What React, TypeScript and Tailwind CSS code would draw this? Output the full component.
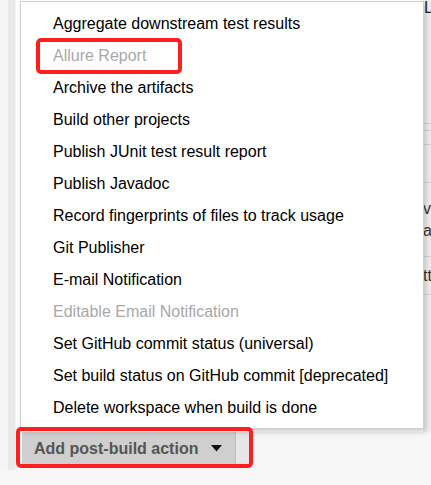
import React from "react";

const items: { label: string; disabled?: boolean }[] = [
  { label: "Aggregate downstream test results" },
  { label: "Allure Report", disabled: true },
  { label: "Archive the artifacts" },
  { label: "Build other projects" },
  { label: "Publish JUnit test result report" },
  { label: "Publish Javadoc" },
  { label: "Record fingerprints of files to track usage" },
  { label: "Git Publisher" },
  { label: "E-mail Notification" },
  { label: "Editable Email Notification", disabled: true },
  { label: "Set GitHub commit status (universal)" },
  { label: "Set build status on GitHub commit [deprecated]" },
  { label: "Delete workspace when build is done" },
];

export default function App() {
  return (
    <div
      className="relative w-[431px] h-[485px] overflow-hidden bg-[#f7f7f7] text-black"
      style={{ fontFamily: '"Liberation Sans", Arial, sans-serif' }}
    >
      {/* underlying page */}
      <div className="flex h-[470px]">
        <div className="w-[8px] bg-[#f5f5f5]" />
        <div className="w-[7px] bg-[#e9e9e9]" />
        <div className="w-[1px] bg-[#f2f2f2]" />
        <div className="flex-1 flex flex-col">
          <div className="flex flex-1">
            <div className="flex-1 bg-white" />
            <div className="w-[8px] flex flex-col bg-[#efefef] text-[16px] leading-none overflow-hidden">
              <div className="h-[12px] pl-[1px] text-[#222]">L</div>
              <div className="h-[111px]" />
              <div className="h-[8px] border-t border-b border-[#d4d4d4]" />
              <div className="h-[14px] border-b border-[#d4d4d4]" />
              <div className="h-[38px] border-b border-[#d4d4d4]" />
              <div className="h-[74px] border-b border-[#d4d4d4] flex flex-col justify-center gap-[6px] text-[#333] whitespace-nowrap">
                <div>vi</div>
                <div>ac</div>
              </div>
              <div className="h-[38px] border-b border-[#d4d4d4] flex items-center text-[#333] whitespace-nowrap">tt</div>
              <div className="flex-1" />
            </div>
          </div>
          <div className="h-[38px] flex items-end pl-[6px] pb-[5px] bg-[#f7f7f7]">
            <button className="flex items-center gap-[13px] h-[33px] pl-[12px] pr-[13px] bg-[#cfcfcf] border-r border-[#bdbdbd] text-[#555] font-bold text-[16px]">
              <span>Add post-build action</span>
              <svg width="11" height="7" viewBox="0 0 11 7">
                <path d="M0 0 L11 0 L5.5 6.5 Z" fill="#111" />
              </svg>
            </button>
            <div className="w-[13px] h-[33px] bg-[#e6e6e6]" />
          </div>
        </div>
      </div>

      {/* dropdown menu */}
      <div className="absolute left-[20px] top-[1px] w-[404px] h-[428px] bg-white border border-[#cfcfcf] shadow-[2px_3px_6px_rgba(0,0,0,0.2)] pt-[6px]">
        {items.map((it) => (
          <div
            key={it.label}
            className={`h-[32px] flex items-center pl-[32px] text-[16px] whitespace-nowrap ${
              it.disabled ? "text-[#a8a8a8]" : "text-black"
            }`}
          >
            {it.label}
          </div>
        ))}
      </div>

      {/* red annotation boxes */}
      <div className="absolute left-[36px] top-[38px] w-[146px] h-[36px] border-[4px] border-[#ff1e1e] rounded-[5px]" />
      <div className="absolute left-[16px] top-[427px] w-[237px] h-[41px] border-[4px] border-[#ff1e1e] rounded-[5px]" />
    </div>
  );
}
